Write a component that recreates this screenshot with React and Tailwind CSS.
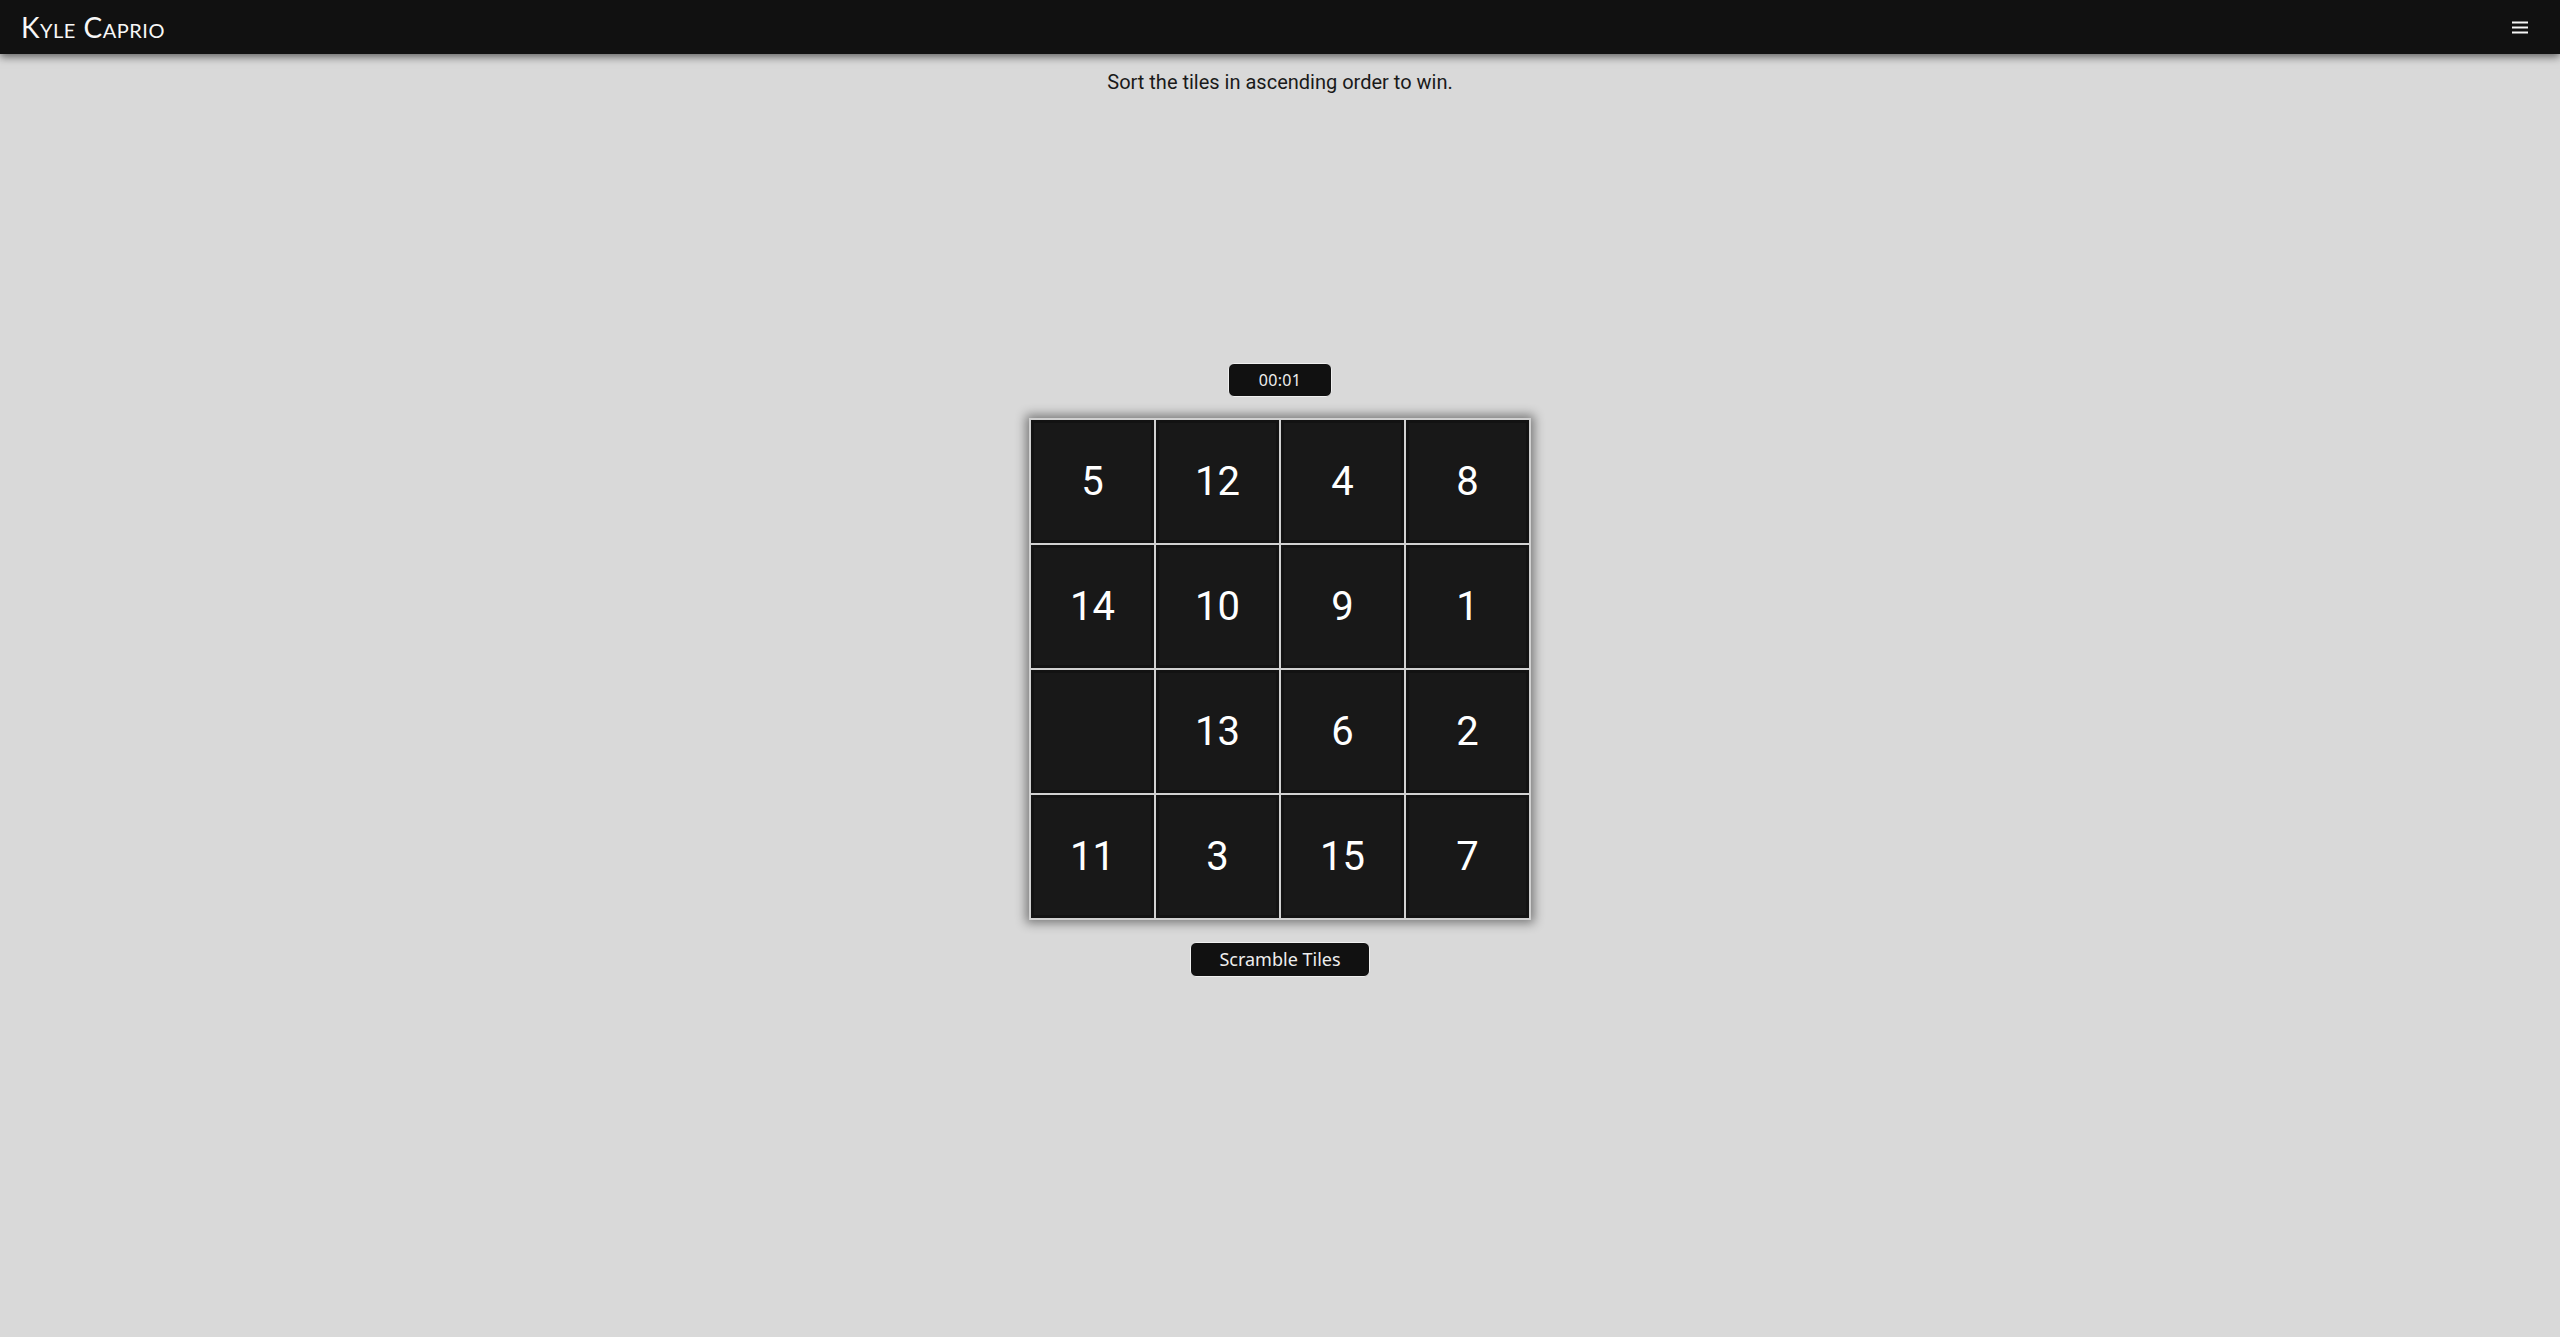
const tiles = [5, 12, 4, 8, 14, 10, 9, 1, null, 13, 6, 2, 11, 3, 15, 7]

function Navbar() {
  return (
    <nav className="h-[54px] bg-[#111111] flex items-center justify-between px-[21px] shadow-[0_3px_8px_rgba(0,0,0,0.55)] relative z-10">
      <a
        href="#"
        className="text-[28px] leading-none text-[#f7f7f7] font-['Lato',sans-serif] font-normal [font-variant:small-caps] tracking-[0.5px]"
      >
        Kyle Caprio
      </a>
      <button className="w-[18px] h-[14px] flex items-center justify-center mr-[10px]" aria-label="menu">
        <svg width="16" height="13" viewBox="0 0 16 13" fill="#f5f5f5">
          <rect x="0" y="0.5" width="16" height="2" />
          <rect x="0" y="5.5" width="16" height="2" />
          <rect x="0" y="10.5" width="16" height="2" />
        </svg>
      </button>
    </nav>
  )
}

function Tile({ n }) {
  return (
    <div className="w-[125px] h-[125px] border border-[#d0d0d0] bg-[#181818] shadow-[inset_0_0_0_3px_#121212] flex items-center justify-center">
      {n && (
        <span className="text-[40px] text-white font-['Roboto',sans-serif] leading-none">{n}</span>
      )}
    </div>
  )
}

export default function App() {
  return (
    <div className="min-h-screen bg-[#d9d9d9] font-['Roboto',sans-serif]">
      <Navbar />
      <p className="text-center text-[20px] leading-[28px] text-[#1a1a1a] mt-[14px]">
        Sort the tiles in ascending order to win.
      </p>

      <div className="flex flex-col items-center mt-[267px]">
        <div className="w-[104px] h-[34px] rounded-[6px] bg-[#111111] border border-[#f0f0f0] flex items-center justify-center text-[16px] text-[#eeeeee] font-['Noto_Sans',sans-serif] tracking-[0.3px]">
          00:01
        </div>

        <div className="mt-[21px] border border-[#d0d0d0] grid grid-cols-4 shadow-[0_0_10px_3px_rgba(0,0,0,0.45)]">
          {tiles.map((n, i) => (
            <Tile key={i} n={n} />
          ))}
        </div>

        <button className="mt-[22px] w-[180px] h-[35px] rounded-[6px] bg-[#111111] border border-[#f0f0f0] text-[18px] text-[#eeeeee] font-['Noto_Sans',sans-serif]">
          Scramble Tiles
        </button>
      </div>
    </div>
  )
}
